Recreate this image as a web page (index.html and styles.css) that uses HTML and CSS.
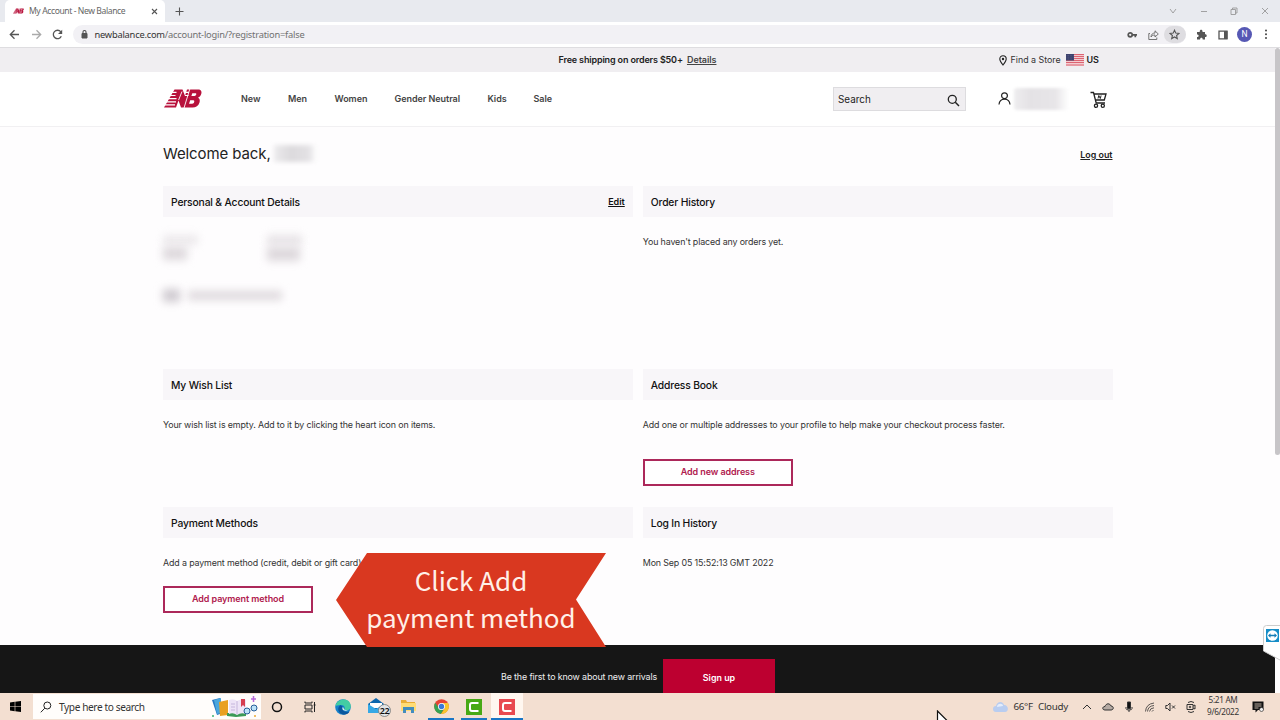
FILE: index.html
```html
<!DOCTYPE html>
<html lang="en">
<head>
<meta charset="utf-8">
<title>My Account - New Balance</title>
<link rel="stylesheet" href="styles.css">
</head>
<body>
<svg width="0" height="0" class="defs">
  <symbol id="nb" viewBox="0 0 38 19">
    <path fill="#b8123c" d="M10.500.5H18.500l2.500 6.500 2-6.500H34c3 0 4 2 3.300 4.200-.5 2-1.600 3.300-3.300 4 1.700.8 2.200 2.500 1.500 4.800C34.500 16.700 32 18.500 28.500 18.500H17l-2.500-7L12 18.500H0Z"/>
    <path stroke="#fff" stroke-width="1.200" fill="none" d="M3 3.300h9.500M2 6.500h9.500M0 9.700h12.500M0 12.800h12M0 15.900h11M20.500 3.300h4.500M21 6.500h3.500"/>
    <path stroke="#fff" stroke-width=".9" fill="none" d="M25.800 0 20 19M14.600 11 18 2.500"/>
    <path fill="#fff" d="M28.300 4.200h3.200c1.500 0 .8 2.700-1 2.700h-3.100ZM26.200 11.300h3.200c1.600 0 1 3.500-1.200 3.500h-3.200Z"/>
  </symbol>
</svg>

<header class="browser">
  <div class="tabstrip">
    <div class="tab">
      <svg class="favicon" width="11" height="8"><use href="#nb"/></svg>
      <span class="tab-title">My Account - New Balance</span>
      <svg width="7" height="7" viewBox="0 0 7 7"><path class="ln" d="m1 1 5 5m0-5-5 5"/></svg>
    </div>
    <svg class="plus" width="9" height="9" viewBox="0 0 9 9"><path class="ln" d="M4.500.5v8M.5 4.500h8"/></svg>
    <div class="window-buttons">
      <svg width="8" height="10" viewBox="0 0 8 10"><path d="m1 3 3 4 3-4"/></svg>
      <svg width="8" height="10" viewBox="0 0 8 10"><path d="M1 5.500h6"/></svg>
      <svg width="8" height="10" viewBox="0 0 8 10"><path d="M1 3.500h4.500v5H1zM2.500 3.500V2H7v5H5.500"/></svg>
      <svg width="8" height="10" viewBox="0 0 8 10"><path d="m1 2 6 6m0-6L1 8"/></svg>
    </div>
  </div>
  <div class="toolbar">
    <svg width="11" height="11" viewBox="0 0 11 11"><path class="nav-line" d="M10 5.500H1.500M5.500 1.300 1.300 5.500l4.200 4.200"/></svg>
    <svg width="11" height="11" viewBox="0 0 11 11"><path class="nav-line dim" d="M1 5.500h8.500M5.500 1.300l4.200 4.200-4.200 4.200"/></svg>
    <svg width="11" height="11" viewBox="0 0 11 11"><path class="nav-line" d="M9.300 7.300A4.200 4.200 0 1 1 8.800 2.800"/><path fill="#555" d="M10.200.8v4.200H6Z"/></svg>
    <div class="omnibox">
      <svg width="7" height="9" viewBox="0 0 7 9"><path d="M1 3.500h5V8H1Z" fill="#555" stroke="#555"/><path class="ln" d="M2 3.500V2a1.500 1.500 0 0 1 3 0v1.500"/></svg>
      <span class="url"><b>newbalance.com</b>/account-login/?registration=false</span>
      <svg class="key" width="11" height="8" viewBox="0 0 11 8"><circle cx="3.200" cy="3.800" r="2" fill="none" stroke="#555" stroke-width="1.700"/><path d="M5 3.800h5M8.300 3.800v2.500" stroke="#555" stroke-width="1.700"/></svg>
      <svg width="11" height="10" viewBox="0 0 11 10"><path class="thin" d="M2 3.500H.8v6h8V7.500M3 7c.2-2.500 1.500-4 4-4V.8l3.300 3.200L7 7V5C5.200 5 4 5.500 3 7Z"/></svg>
      <span class="star"><svg width="11" height="11" viewBox="0 0 11 11"><path class="ln" d="m5.500 1.200 1.300 2.900 3.200.3-2.400 2.100.7 3.100-2.800-1.600-2.800 1.600.7-3.100L1 4.400l3.200-.3Z"/></svg></span>
    </div>
    <svg class="puzzle" width="11" height="11" viewBox="0 0 11 11"><path fill="#555" d="M1 3h2.800c-.6-3 3.200-3 2.700 0H9v2.300c2.300-.3 2.300 3 0 2.700v2.500H6.700c.2-2.300-2.800-2.300-2.600 0H1V8c2.200.2 2.200-2.800 0-2.600Z"/></svg>
    <svg class="panel" width="10" height="10" viewBox="0 0 10 10"><path d="M1 1.200h8v7.600H1Z" fill="none" stroke="#555" stroke-width="1.300"/><path fill="#555" d="M6 1h3.500v8H6Z"/></svg>
    <span class="avatar">N</span>
    <svg class="dots" width="4" height="11" viewBox="0 0 4 11"><circle cx="2" cy="1.500" r="1"/><circle cx="2" cy="5.300" r="1"/><circle cx="2" cy="9.100" r="1"/></svg>
  </div>
</header>

<div class="page">
  <div class="promo">
    <p class="promo-text">Free shipping on orders $50+ <a>Details</a></p>
    <svg width="8" height="11" viewBox="0 0 8 11"><path d="M4 10C2 7.500.8 5.800.8 4a3.200 3.200 0 0 1 6.400 0C7.200 5.800 6 7.500 4 10Z" fill="none" stroke="#222" stroke-width="1.100"/><circle cx="4" cy="4" r="1.200" fill="#222"/></svg>
    <span class="store">Find a Store</span>
    <svg width="18" height="12" viewBox="0 0 18 12"><path fill="#f3ccd1" d="M0 0h18v12H0z"/><path stroke="#dc6472" d="M0 .5h18M0 2.500h18M0 4.500h18M0 6.500h18M0 8.500h18M0 11h18"/><path fill="#3d426e" d="M0 0h8v6.500H0z"/><path stroke="#777ba0" stroke-width=".5" stroke-dasharray=".6 1" d="M.7 1.500h7M.7 3.200h7M.7 5h7"/></svg>
    <span class="country">US</span>
  </div>
  <div class="site-header">
    <svg class="logo" width="38" height="19"><use href="#nb"/></svg>
    <nav class="nav"><a class="n1">New</a><a class="n2">Men</a><a class="n3">Women</a><a class="n4">Gender Neutral</a><a class="n5">Kids</a><a>Sale</a></nav>
    <div class="search"><span>Search</span><svg width="13" height="13" viewBox="0 0 13 13"><circle cx="5.300" cy="5.300" r="4" fill="none" stroke="#222" stroke-width="1.300"/><path d="m8.300 8.300 3.700 3.700" stroke="#222" stroke-width="1.500"/></svg></div>
    <svg class="person" width="13" height="13" viewBox="0 0 13 13"><circle cx="6.500" cy="3.700" r="2.900"/><path d="M1 12.500C1.500 5.500 11.500 5.500 12 12.500"/></svg>
    <span class="redacted-name"></span>
    <svg class="cart" width="18" height="18" viewBox="0 0 18 18"><path d="M.5 1.500h3L6.200 12H15M4 3h12l-1.700 6H5.500"/><circle cx="6" cy="14.800" r="1.600"/><circle cx="12.800" cy="14.800" r="1.600"/><path stroke-width="1" d="m8 7.500.8-3 1.500 3 .8-3"/></svg>
  </div>

  <main class="account">
    <div class="welcome"><h1>Welcome back,</h1><span class="redacted-welcome"></span><a class="logout">Log out</a></div>
    <div class="cards">
      <section class="card">
        <h2><span>Personal &amp; Account Details</span><a class="edit">Edit</a></h2>
        <div class="redacted-row"><div class="smear"><i class="s1"></i><i class="s2"></i></div><div class="smear"><i class="s3"></i><i class="s4"></i></div></div>
        <div class="redacted-mail"><i class="s5"></i><i class="s6"></i></div>
      </section>
      <section class="card"><h2>Order History</h2><p>You haven't placed any orders yet.</p></section>
      <section class="card"><h2>My Wish List</h2><p>Your wish list is empty. Add to it by clicking the heart icon on items.</p></section>
      <section class="card"><h2>Address Book</h2><p class="p-addr">Add one or multiple addresses to your profile to help make your checkout process faster.</p><button class="btn b-addr">Add new address</button></section>
      <section class="card"><h2>Payment Methods</h2><p>Add a payment method (credit, debit or gift card)</p><button class="btn b-pay">Add payment method</button></section>
      <section class="card"><h2>Log In History</h2><p>Mon Sep 05 15:52:13 GMT 2022</p></section>
    </div>
  </main>
  <footer class="signup"><span>Be the first to know about new arrivals</span><button>Sign up</button></footer>
</div>
<div class="scrollbar"></div>

<div class="callout">
  <svg width="272" height="95" viewBox="0 0 272 95"><path fill="#d93820" d="M31 0h239l-30 46.500L270 94H31L0 47Z"/></svg>
  <p><span>Click Add</span><span>payment method</span></p>
</div>

<svg class="remote" width="17" height="36" viewBox="0 0 17 36"><path fill="#fff" stroke="#ccc" d="M17 .5H3.500Q.5.500.5 3.500V26L17 35"/><rect x="3" y="4" width="13" height="13" fill="#168dc7"/><circle cx="9.500" cy="10.500" r="5.300" fill="#fff"/><path fill="#167eb8" d="m5 10.500 2.500-2.200v1.500h4V8.300l2.500 2.200-2.500 2.200v-1.500h-4v1.500Z"/></svg>

<div class="taskbar">
  <svg class="start" width="11" height="11" viewBox="0 0 11 11"><path d="m0 1.500 4.700-.7v4.400H0ZM5.300.7 11 0v5.200H5.300ZM0 5.800h4.700v4.400L0 9.500Zm5.300 0H11V11l-5.700-.8Z"/></svg>
  <div class="tasksearch">
    <svg width="12" height="12" viewBox="0 0 12 12"><circle cx="7.300" cy="4.500" r="3.500" fill="none" stroke="#222"/><path d="M4.800 7.200.8 11.300" stroke="#222"/></svg>
    <span>Type here to search</span>
    <svg class="books" width="48" height="22" viewBox="0 0 48 22"><path fill="#2878c5" d="m1 4 8-2 3 15-6 2Z"/><path fill="#4aa6dc" d="m3 4 7-2v15l-4 1Z"/><path fill="#e9a020" d="m8 6 9-2v15l-8 1Z"/><path fill="#3c9a57" d="M16 17h19v3l-10 1-9-1Z"/><path fill="#eee4f7" d="M18 4q5-2 8 1 5-3 9-1v14q-5-2-9 1-4-3-8-1Z"/><path stroke="#c6b6dc" fill="none" d="M26 5v13M20 8h4M20 11h4M20 14h4"/><path fill="#d63d50" d="M30 3h4v8l-2-2-2 2Z"/><g fill="#bce3f8" stroke="#285e98"><circle cx="36" cy="15" r="3"/><circle cx="43" cy="12" r="3"/></g><path stroke="#b767d8" stroke-width="1.500" d="M40 3h5M42.500 0v6"/><circle cx="2" cy="20" r="1" fill="#3cb371"/><circle cx="44" cy="20" r="1" fill="#eda930"/></svg>
  </div>
  <div class="apps">
    <span class="app"><svg width="12" height="12" viewBox="0 0 12 12"><circle cx="6" cy="6" r="4.500" fill="none" stroke="#111" stroke-width="1.500"/></svg></span>
    <span class="app"><svg width="12" height="12" viewBox="0 0 12 12" fill="none" stroke="#222"><path d="M1 .5V2h7V.5M1 11.500V10h7v1.500M1 4h7v4H1ZM10.500 1v10"/><path stroke-width="2" d="M9.800 4h1.500"/></svg></span>
    <span class="app"><svg width="16" height="16" viewBox="0 0 16 16"><circle cx="8" cy="8" r="7.800" fill="#1681cb"/><path fill="#43cda3" d="M.5 7C2-1 15-2 15.800 7c.2 4-4 5-6.500 3.500 1.500-3-1-5-4-4.500C3 6.300 1 6.500.5 7Z"/><path fill="#0a579d" d="M5.300 6C1 10 4 15 9 15.700c3-.2 4.500-1.500 5.500-3.200-3 1.200-8 0-7-5Z"/><path fill="#e5efea" d="M8 8c-2 2 1 5 5 3-2 .3-4-.4-4-1Z"/></svg></span>
    <span class="app mail"><svg width="24" height="20" viewBox="0 0 24 20"><path fill="#0c67ae" d="m0 7 8-6 8 6v9H0Z"/><path fill="#fff" d="M2 6h12v5H2Z"/><path fill="#36a8e5" d="m0 7 8 5 8-5v9H0Z"/><circle cx="16.500" cy="13.500" r="6" fill="#e2e5e7" stroke="#777" stroke-width=".8"/><text x="16.500" y="16.800" text-anchor="middle" class="badge">22</text></svg></span>
    <span class="app"><svg width="15" height="13" viewBox="0 0 15 13"><path fill="#e9ad35" d="M0 0h5l1 2h8v3H0Z"/><path fill="#ffdc75" d="M0 3h15v8H0Z"/><path fill="#438dbd" d="M2 7h11v6h-3v-3H5v3H2Z"/></svg></span>
    <span class="app open"><svg width="15" height="15" viewBox="0 0 15 15"><circle cx="7.500" cy="7.500" r="7.300" fill="#e54435"/><path fill="#35a353" d="M1.200 3.800A7.400 7.400 0 0 0 7 14.900l3.500-6-6-.5Z"/><path fill="#f7c52d" d="M7 14.900A7.400 7.400 0 0 0 14 4H8l3 5Z"/><circle cx="7.500" cy="7.500" r="3.500" fill="#fff"/><circle cx="7.500" cy="7.500" r="2.700" fill="#3879d9"/></svg></span>
    <span class="app open"><svg width="16" height="16" viewBox="0 0 16 16"><path fill="#47a915" d="M0 0h16v16H0z"/><path fill="none" stroke="#fff" stroke-width="2" d="M12.500 4H6Q4 4 4 6v4q0 2 2 2h6.500"/></svg></span>
    <span class="app open active"><svg width="16" height="16" viewBox="0 0 16 16"><path fill="#e84950" d="M0 0h16v16H0z"/><path fill="none" stroke="#fff" stroke-width="2" d="M12.500 4H6Q4 4 4 6v4q0 2 2 2h6.500"/></svg></span>
  </div>
  <div class="weather"><svg width="15" height="10" viewBox="0 0 15 10"><path fill="#b9cdf0" d="M3 10a3 3 0 0 1 0-6C4-1 10-1 11 3c5 0 5 7 1 7Z"/><path fill="#e4edfc" d="M4 5c0-4 6-4 6-1Z"/></svg><span class="temp">66°F</span><span class="cloudy">Cloudy</span></div>
  <div class="tray">
    <svg width="10" height="12" viewBox="0 0 10 12"><path d="m1 8 4-4 4 4"/></svg>
    <svg width="12" height="12" viewBox="0 0 12 12"><path class="grey" d="M3 9C0 9 0 5.500 3 5.500 4 2 8 2 9 5c3 0 3 4 0 4Z"/></svg>
    <svg width="10" height="12" viewBox="0 0 10 12"><path class="solid" d="M3.500 1h3v6.500h-3Z"/><path d="M2 6v1.500q0 1.500 3 1.500t3-1.500V6M5 9v2"/></svg>
    <svg width="11" height="12" viewBox="0 0 11 12"><path class="wifi" d="M1.500 10.500Q2 3 10 2M3.500 10.500Q4 5 10 4.500M5.500 10.500Q6 7 10 6.800M8 10.500l1.500-1.500"/></svg>
    <svg width="11" height="12" viewBox="0 0 11 12"><path d="M.8 4.500h1.700L5 2v8L2.500 7.500H.8ZM7 4.500l3 3m0-3-3 3"/></svg>
    <svg width="11" height="12" viewBox="0 0 11 12"><path d="M1 3.500h6v5H1Zm6 1.500 2-1v4L7 7M2 1.500Q5-.5 8 1.500M2 10.500q3 2 6 0"/><circle cx="4" cy="6" r=".8"/></svg>
  </div>
  <div class="clock"><span>5:21 AM</span><span>9/6/2022</span></div>
  <svg class="notice" width="12" height="12" viewBox="0 0 12 12"><path fill="#111" d="M.5.500h11v8.500H6L3.500 11.500V9h-3Z"/><path stroke="#e8d8c9" stroke-width=".8" d="M2.500 3h7M2.500 5h7M2.500 7h4"/><circle cx="9.500" cy="8.500" r="2" fill="#eee" stroke="#222" stroke-width=".6"/></svg>
</div>
<svg class="cursor" width="13" height="10" viewBox="0 0 13 10"><path fill="#fff" stroke="#111" stroke-width="1.200" d="M1.500 12V1l10 10"/></svg>
</body>
</html>
```
FILE: styles.css
```css
* { box-sizing: border-box; }
body { margin: 0; width: 1280px; height: 720px; overflow: hidden; position: relative; background: #fefdfe; font-family: Inter, "Liberation Sans", sans-serif; color: #222; display: flex; flex-direction: column; }
svg { display: block; flex: none; }
span, a { white-space: nowrap; }
h1, h2, p { margin: 0; font-weight: 400; }
button { font-family: inherit; padding: 0; }
.defs { position: absolute; }
.ln { fill: none; stroke: #555; stroke-width: 1.1; }
.thin { fill: none; stroke: #666; stroke-width: .9; }

.browser { height: 48px; flex: none; border-bottom: 1px solid #dedde0; background: #fff; }
.tabstrip { height: 22px; display: flex; align-items: center; background: #e8eaef; padding-left: 5px; }
.tab { width: 160px; height: 22px; display: flex; align-items: center; padding: 0 7px 0 8px; background: #fff; border-radius: 5px 5px 0 0; }
.tab-title { font: 8.600px/22px "Noto Sans", sans-serif; color: #666; margin-left: 5px; width: 122px; letter-spacing: -.42px; }
.plus { margin-left: 10px; }
.window-buttons { margin-left: auto; display: flex; gap: 22.700px; padding-right: 11px; }
.window-buttons path { fill: none; stroke: #999; stroke-width: .9; }
.toolbar { height: 25px; display: flex; align-items: center; padding-left: 9px; gap: 10.500px; }
.nav-line { fill: none; stroke: #555; stroke-width: 1.300; }
.nav-line.dim { stroke: #aaa; }
.omnibox { width: 1113px; height: 19px; margin-left: -1px; padding-left: 8px; border-radius: 10px; background: #f2f1f5; display: flex; align-items: center; }
.url { font: 9.300px/19px "Noto Sans", sans-serif; letter-spacing: -.22px; color: #707070; margin-left: 7px; }
.url b { font-weight: 400; color: #333; }
.key { margin-left: auto; margin-right: 10px; }
.star { width: 22px; height: 17px; margin-left: 5px; border-radius: 9px; background: #dedde1; display: grid; place-items: center; }
.avatar { width: 15px; height: 15px; border-radius: 50%; background: #5658b4; color: #fff; font: 8.500px/15px Roboto, sans-serif; text-align: center; margin-left: -1px; }
.dots { fill: #444; margin-left: 1.500px; }

.page { width: 1275px; height: 645px; flex: none; }
.promo { height: 24px; background: #f0eef1; display: flex; align-items: center; }
.promo-text { width: 440px; margin-left: 558.500px; font-size: 9px; font-weight: 600; line-height: 24px; letter-spacing: -.15px; }
.promo-text a { text-decoration: underline; margin-left: 2px; color: #444; letter-spacing: -.05px; }
.store { font-size: 8.900px; line-height: 11px; margin: -1px 4px 0 4px; width: 51px; color: #333; }
.country { font-size: 9px; line-height: 11px; font-weight: 600; margin: -1px 0 0 3px; }
.site-header { height: 55px; border-bottom: 1px solid #f1f0f2; background: #fff; display: flex; align-items: center; padding-left: 164px; }
.logo { margin-top: -1px; }
.nav { display: flex; width: 592px; margin: -1px 0 0 39px; font-size: 9px; font-weight: 600; letter-spacing: -.05px; color: #444; }
.n1 { width: 47px; }
.n2 { width: 46.500px; }
.n3 { width: 60px; }
.n4 { width: 93px; }
.n5 { width: 46px; }
.search { width: 133px; height: 24px; padding: 0 5px 0 4px; background: #f0eef1; border: 1px solid #dddcdf; display: flex; align-items: center; justify-content: space-between; font-size: 9.900px; }
.search svg { margin-top: 3px; }
.person { margin: -1px 0 0 32px; fill: none; stroke: #222; stroke-width: 1.200; }
.redacted-name { width: 55px; height: 22px; margin-left: 3px; background: linear-gradient(90deg, #eeedef, #e4e2e5 30%, #e7e5e8 75%, #fff); border-radius: 3px; filter: blur(1.500px); }
.cart { margin: 1px 0 0 21px; fill: none; stroke: #222; stroke-width: 1.300; }

.account { height: 518px; padding: 12px 0 0 163px; }
.welcome { width: 949.500px; height: 29px; display: flex; align-items: center; }
h1 { font-size: 15px; line-height: 29px; letter-spacing: -.1px; width: 110px; white-space: nowrap; }
.redacted-welcome { width: 43px; height: 17px; margin-left: 1px; background: linear-gradient(90deg, #ecebed, #dcdadd 40%, #e3e1e4 80%, #fff); filter: blur(2px); }
.logout { margin-left: auto; font-size: 8.900px; font-weight: 600; text-decoration: underline; padding-top: 1px; }
.cards { display: grid; width: 949.500px; grid-template-columns: 1fr 1fr; column-gap: 10px; grid-template-rows: 183px 138px 138px; padding-top: 18px; }
h2 { height: 31px; background: #f8f6f9; padding: 0 8px; display: flex; align-items: center; font-size: 10.300px; letter-spacing: -.15px; font-weight: 500; color: #111; }
.edit { margin-left: auto; font-size: 9px; letter-spacing: 0; font-weight: 600; text-decoration: underline; }
.card p { font-size: 8.900px; letter-spacing: -.14px; line-height: 14px; margin-top: 18px; color: #333; }
.card .p-addr { letter-spacing: -.117px; }
.btn { width: 150px; height: 27px; border: 2px solid #ac285a; background: #fff; color: #b0204e; font-size: 9px; font-weight: 600; letter-spacing: -.08px; line-height: 20px; display: block; padding-bottom: 2px; }
.b-addr { margin-top: 27px; }
.b-pay { margin-top: 16px; }
.redacted-row { display: flex; gap: 57px; margin-top: 18px; }
.smear { width: 47px; height: 30px; }
.smear i, .redacted-mail i { display: block; filter: blur(4px); background: #ddd8dc; }
.s1 { width: 35px; height: 10px; opacity: .55; }
.s2 { width: 24px; height: 13px; margin-top: 2px; }
.s3 { width: 35px; height: 10px; opacity: .7; }
.s4 { width: 33px; height: 14px; margin-top: 2px; }
.redacted-mail { display: flex; align-items: center; gap: 8px; margin-top: 24px; }
.s5 { width: 17px; height: 13px; }
.redacted-mail .s5 { background: #cfcad0; }
.s6 { width: 94px; height: 9px; }
.signup { height: 48px; background: #161616; color: #eee; display: flex; font-size: 8.900px; padding: 14px 0 0 501px; }
.signup span { width: 162px; line-height: 36px; letter-spacing: -.13px; }
.signup button { width: 112px; height: 34px; border: 0; background: #bd0030; color: #fff; font-size: 8.900px; font-weight: 600; padding-top: 3px; }
.scrollbar { position: absolute; left: 1275px; top: 48px; width: 5px; height: 407px; background: #c7c5c8; border-radius: 3px; }

.callout { position: absolute; left: 336px; top: 553px; width: 272px; height: 95px; }
.callout p { position: absolute; inset: 9px 2px 0 0; font-family: "Noto Sans CJK SC", sans-serif; font-size: 26px; line-height: 36.500px; color: #fff0e8; display: flex; flex-direction: column; align-items: center; }
.remote { position: absolute; left: 1263px; top: 625px; }

.taskbar { height: 27px; flex: none; background: #f3dfd1; display: flex; align-items: center; font-family: "Noto Sans", sans-serif; color: #333; }
.start { margin: 0 12px 0 10px; }
.tasksearch { width: 228px; height: 25px; background: #fffdfb; display: flex; align-items: center; padding-left: 7px; font-size: 10.100px; letter-spacing: -.38px; }
.tasksearch span { margin-left: 7px; width: 152px; }
.apps { display: flex; height: 27px; }
.app { width: 32.800px; height: 27px; display: grid; place-items: center; }
.app.mail svg { margin-left: 8px; }
.app.open { background: linear-gradient(#1976c6, #1976c6) center bottom / 26px 2px no-repeat; }
.app.active { background: linear-gradient(#1976c6, #1976c6) center bottom / 32px 2px no-repeat #fff7f0; }
.badge { font: 600 9px "Noto Sans", sans-serif; letter-spacing: -.4px; fill: #111; }
.weather { display: flex; align-items: center; margin-left: auto; font-size: 9.800px; letter-spacing: -.3px; }
.temp { margin-left: 6px; width: 24.500px; }
.cloudy { width: 44px; letter-spacing: -.3px; }
.tray { display: flex; gap: 10px; align-items: center; }
.tray path, .tray circle { fill: none; stroke: #333; stroke-width: 1; }
.tray .grey { fill: #b5aaa3; }
.tray .solid { fill: #111; }
.tray .wifi { stroke-width: .8; }
.clock { width: 50px; margin-left: 1px; display: flex; flex-direction: column; align-items: center; font-size: 8.200px; letter-spacing: -.3px; line-height: 12px; padding-bottom: 1px; }
.notice { margin: 0 16px 0 4px; }
.cursor { position: absolute; left: 936px; top: 710px; }
```
